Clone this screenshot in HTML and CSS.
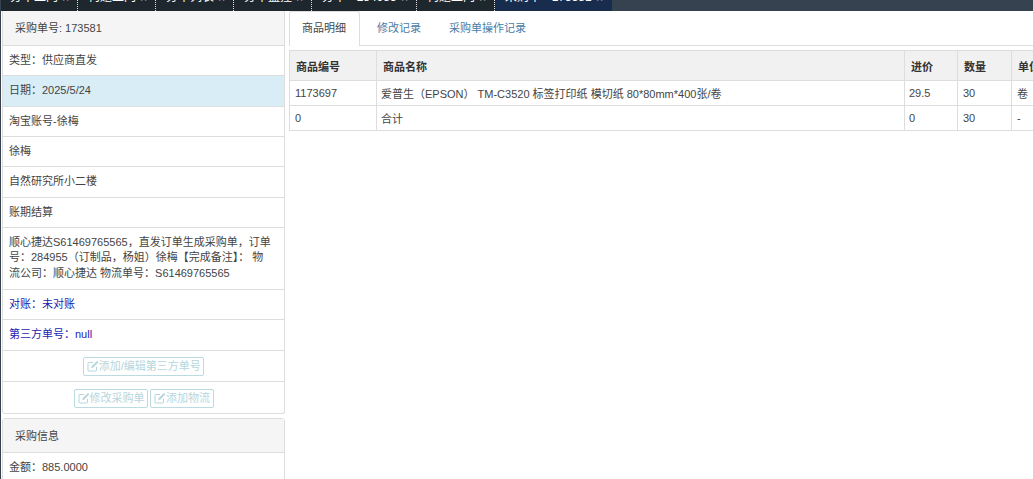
FILE: index.html
```html
<!DOCTYPE html>
<html lang="zh-CN">
<head>
<meta charset="utf-8">
<title>采购单 173581</title>
<link rel="stylesheet" href="styles.css">
</head>
<body>
<svg class="defs" width="0" height="0" aria-hidden="true">
  <symbol id="edit" viewBox="0 0 12 12">
    <path d="M9.5 6.8V10.2a.8.8 0 0 1-.8.8H1.8a.8.8 0 0 1-.8-.8V3.3a.8.8 0 0 1 .8-.8H6" fill="none" stroke="currentColor"/>
    <path d="M4.2 8.2 4.8 6 10 .9l1.4 1.4L6.3 7.5z" fill="currentColor"/>
  </symbol>
</svg>
<nav class="topbar">
  <a class="toptab">分单上门 <i>✖</i></a>
  <a class="toptab">构题上门 <i>✖</i></a>
  <a class="toptab">分单列表 <i>✖</i></a>
  <a class="toptab">分单监控 <i>✖</i></a>
  <a class="toptab wide">分单 - 284955 <i>✖</i></a>
  <a class="toptab">构题上门 <i>✖</i></a>
  <a class="toptab active">采购单 - 173581 <i>✖</i></a>
</nav>
<main class="layout">
  <aside class="sidebar">
    <section class="panel">
      <h2 class="panel-head">采购单号: 173581</h2>
      <div class="row">类型：供应商直发</div>
      <div class="row info">日期：2025/5/24</div>
      <div class="row">淘宝账号-徐梅</div>
      <div class="row">徐梅</div>
      <div class="row">自然研究所小二楼</div>
      <div class="row">账期结算</div>
      <div class="row note">顺心捷达S61469765565，直发订单生成采购单，订单号：284955（订制品，杨姐）徐梅【完成备注】： 物流公司：顺心捷达 物流单号：S61469765565</div>
      <div class="row blue">对账：未对账</div>
      <div class="row blue">第三方单号：null</div>
      <div class="row actions">
        <button class="btn" disabled><svg class="icon"><use href="#edit"/></svg>添加/编辑第三方单号</button>
      </div>
      <div class="row actions">
        <button class="btn" disabled><svg class="icon"><use href="#edit"/></svg>修改采购单</button>
        <button class="btn" disabled><svg class="icon"><use href="#edit"/></svg>添加物流</button>
      </div>
    </section>
    <section class="panel">
      <h2 class="panel-head">采购信息</h2>
      <div class="row">金额：885.0000</div>
    </section>
  </aside>
  <section class="content">
    <div class="tabs">
      <a class="tab current">商品明细</a>
      <a class="tab">修改记录</a>
      <a class="tab">采购单操作记录</a>
    </div>
    <table class="goods">
      <colgroup>
        <col class="c-code"><col class="c-name"><col class="c-price"><col class="c-qty"><col class="c-unit">
      </colgroup>
      <thead>
        <tr><th>商品编号</th><th>商品名称</th><th>进价</th><th>数量</th><th>单位</th></tr>
      </thead>
      <tbody>
        <tr><td>1173697</td><td>爱普生（EPSON） TM-C3520 标签打印纸 模切纸 80*80mm*400张/卷</td><td>29.5</td><td>30</td><td>卷</td></tr>
        <tr><td>0</td><td>合计</td><td>0</td><td>30</td><td>-</td></tr>
      </tbody>
    </table>
  </section>
</main>
</body>
</html>
```
FILE: styles.css
```css
html, body {
  margin: 0;
  height: 479px;
  overflow: hidden;
  background: #fff;
}
body {
  font-family: "Liberation Sans", "Noto Sans CJK SC", sans-serif;
  font-size: 11px;
  color: #444;
  border-left: 1px solid #36424f;
  box-sizing: border-box;
}
.defs { display: block; height: 0; }

.topbar {
  display: flex;
  align-items: flex-end;
  height: 11px;
  margin-left: -1px;
  overflow: hidden;
  background: #36424f;
}
.toptab {
  flex: none;
  box-sizing: border-box;
  width: 78px;
  height: 22px;
  padding-left: 10px;
  line-height: 17px;
  font-size: 12px;
  color: #fff;
  white-space: nowrap;
  overflow: hidden;
  background: #1f272e;
  border-right: 1px dotted #ddd;
}
.toptab i { font-style: normal; font-size: 11px; color: #ddd; }
.toptab.wide { width: 105px; }
.toptab.active { width: 117px; background: #182c4d; border-right: 0; }

.layout {
  display: flex;
  align-items: flex-start;
  gap: 3px;
  padding-left: 1px;
}

.sidebar {
  flex: none;
  width: 283px;
  display: flex;
  flex-direction: column;
  gap: 4px;
}
.panel {
  border: 1px solid #ddd;
  border-top: 0;
  border-radius: 0 0 3px 3px;
  background: #fff;
}
.panel + .panel { border-top: 1px solid #ddd; border-radius: 3px 3px 0 0; }
.panel-head {
  margin: 0;
  height: 33px;
  padding: 0 12px;
  font-size: 11px;
  font-weight: 400;
  line-height: 34px;
  color: #444;
  background: #f5f5f5;
  border-bottom: 1px solid #ddd;
}
.panel:first-child .panel-head { height: 34px; }
.row {
  padding: 7px 11px 7px 6px;
  line-height: 15.35px;
  border-bottom: 1px solid #ddd;
}
.panel > .row:last-child { border-bottom: 0; }
.row.note { padding-bottom: 8px; }
.row.info { background: #d9edf7; }
.row.blue { color: #1d1db0; }
.row.actions {
  display: flex;
  justify-content: center;
  gap: 2px;
  padding: 5px 0;
  padding-top: 6px;
}
.row.actions + .row.actions {
  padding-top: 7px;
  padding-bottom: 5px;
}
.btn {
  display: inline-flex;
  align-items: center;
  height: 19px;
  padding: 0 2.5px 0 3px;
  font: inherit;
  line-height: 1;
  color: #b5d6dd;
  background: #fff;
  border: 1px solid #bcdbe0;
  border-radius: 2px;
}
.icon {
  width: 12px;
  height: 12px;
  flex: none;
}

.content {
  flex: 1;
  min-width: 0;
  overflow: hidden;
  padding-left: 1px;
}
.tabs {
  display: flex;
  height: 34px;
  border-bottom: 1px solid #ddd;
}
.tab {
  height: 33px;
  padding: 0 13px;
  line-height: 33px;
  color: #4a7ba6;
  border: 1px solid transparent;
  border-bottom: 0;
}
.tab.current {
  height: 34px;
  padding: 0 13px 0 12px;
  margin-right: 3px;
  color: #444;
  background: #fff;
  border-color: #ddd;
  border-radius: 3px 3px 0 0;
}

.goods {
  width: 760px;
  margin-top: 4px;
  table-layout: fixed;
  border-collapse: collapse;
}
.c-code { width: 87px; }
.c-name { width: 528px; }
.c-price { width: 53px; }
.c-qty { width: 54px; }
.c-unit { width: 38px; }
.goods th, .goods td {
  border: 1px solid #ddd;
  text-align: left;
  white-space: nowrap;
  overflow: hidden;
}
.goods th {
  height: 29px;
  padding: 0 6px;
  font-weight: 700;
  color: #333;
  background: #f1f1f1;
}
.goods td {
  height: 24px;
  padding: 0 4px 0 5px;
}
.goods td:nth-child(2), .goods td:nth-child(3) { padding-left: 4px; }
```
